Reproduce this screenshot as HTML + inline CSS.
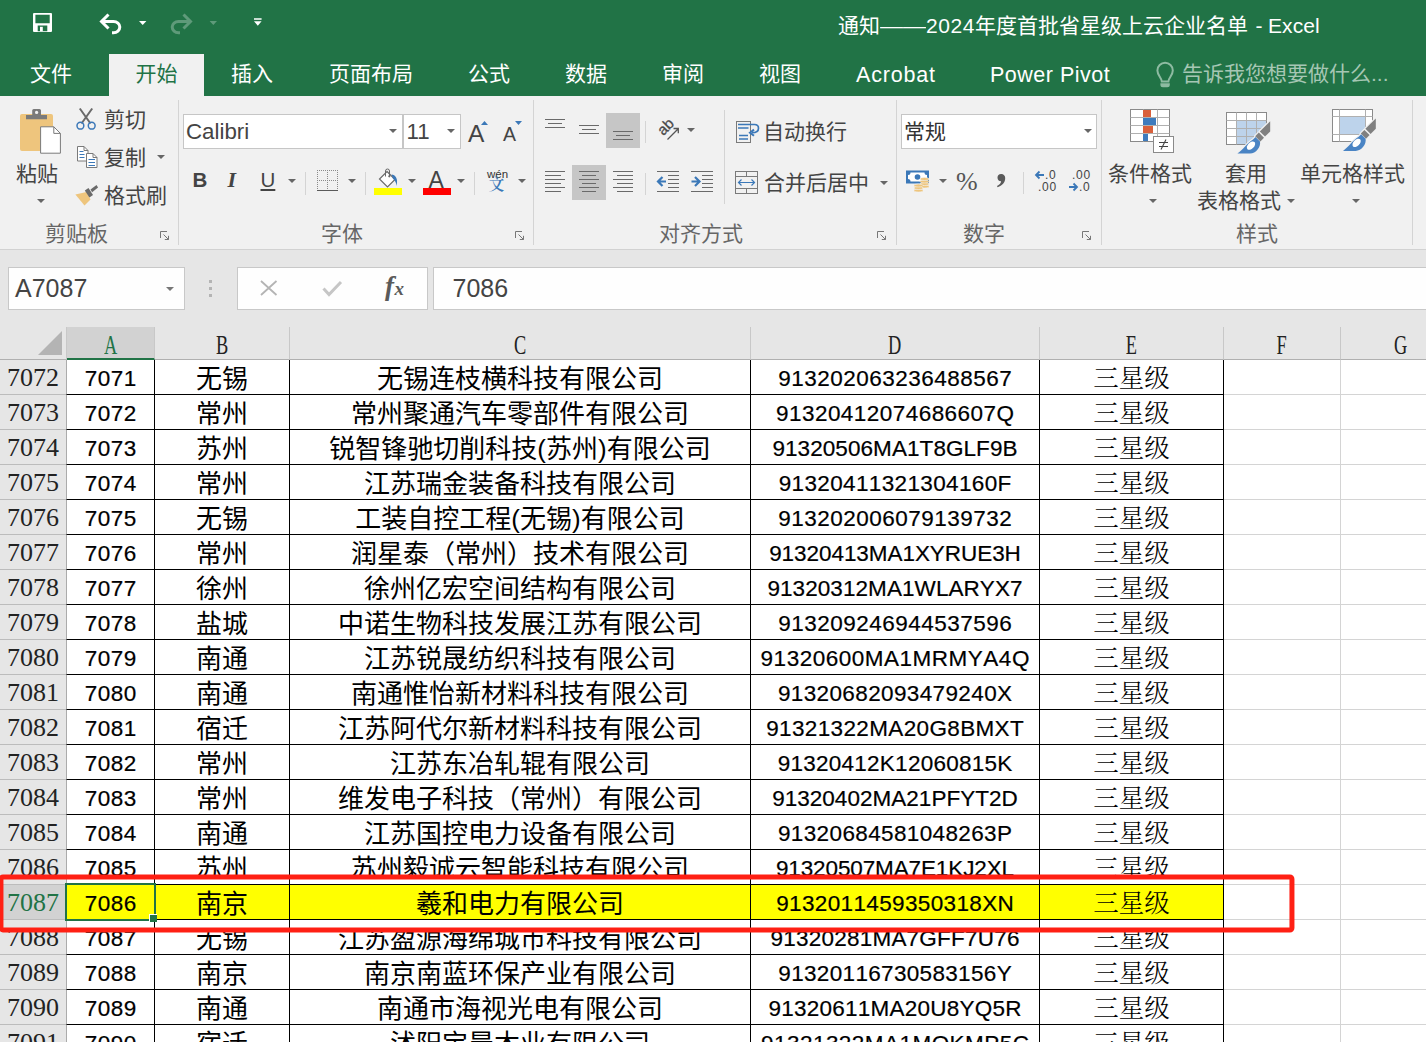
<!DOCTYPE html><html lang="zh-CN"><head><meta charset="utf-8"><title>Excel</title><style>html,body{margin:0;padding:0}
body{width:1426px;height:1042px;overflow:hidden;background:#e6e6e6;position:relative;font-family:"Liberation Sans","Noto Sans CJK SC",sans-serif;color:#444}
div,span,svg{position:absolute;box-sizing:border-box}
#top{left:0;top:0;width:1426px;height:96px;background:#217346}
.tab{top:54px;height:42px;line-height:40px;font-size:21px;color:#fff;white-space:nowrap}
.tab.act{background:#f1f1f1;color:#217346;left:109px;width:95px;text-align:center}
#title{top:1px;left:838px;height:50px;line-height:50px;font-size:21px;color:#fff;white-space:nowrap}
#ribbon{left:0;top:96px;width:1426px;height:154px;background:#f1f1f1;border-bottom:1px solid #d2d2d2}
.t{font-size:21px;line-height:30px;height:30px;white-space:nowrap;color:#444;margin-top:.3px}
.gl{font-size:21px;line-height:30px;height:30px;white-space:nowrap;color:#666;top:219px}
.vs{width:1px;background:#d4d4d4}
.box{background:#fff;border:1px solid #c6c6c6}
.arr{width:0;height:0;border-left:4px solid transparent;border-right:4px solid transparent;border-top:4px solid #666}
.selbg{background:#c6c6c6}
#fbar{left:0;top:250px;width:1426px;height:78px;background:#e6e6e6}
#grid{left:0;top:0;width:1426px;height:1042px}
#sheet{left:0;top:327px;width:1426px;height:715px;background:#fff}
.ch{z-index:2;top:327px;height:33px;line-height:36px;background:#e6e6e6;text-align:center;font-family:"Liberation Serif","Noto Serif CJK SC",serif;font-size:27px;color:#222;border-right:1px solid #c8c8c8;border-bottom:1px solid #b0b0b0}
.ch.sel{background:#d2d2d2;color:#217346;border-bottom:2px solid #217346}
.corner{z-index:2;left:0;top:327px;width:67px;height:33px;background:#e6e6e6;border-right:1px solid #c8c8c8;border-bottom:1px solid #b0b0b0}
.corner:after{content:"";position:absolute;right:4px;bottom:4px;width:0;height:0;border-left:24px solid transparent;border-bottom:24px solid #b4b4b4}
.rh{left:0;width:67px;height:35px;line-height:36px;background:#e6e6e6;text-align:center;font-family:"Liberation Serif","Noto Serif CJK SC",serif;font-size:26px;color:#222;border-right:1px solid #b0b0b0;border-bottom:1px solid #bcbcbc}
.rh.sel{background:#d2d2d2;color:#217346}
.c{height:36px;border:1px solid #000;background:#fff;color:#000;font-size:26px;text-align:center;white-space:nowrap;overflow:hidden}
.c span{position:static;display:block;line-height:36px;height:34px}
.c.hl{background:#ffff00}
.ce span{font-family:"Noto Serif CJK SC",serif;font-weight:300;font-size:25.5px;line-height:33px}
.g{height:35px;border-right:1px solid #d4d4d4;border-bottom:1px solid #d4d4d4;background:#fff}
.bt{font-size:23px;line-height:35px;height:35px;white-space:nowrap;color:#444}
.fb{border-color:#c8c8c8;background:#fefefe}
.ft{font-size:25px;line-height:42px;height:42px;white-space:nowrap;color:#444}
.ch span{position:static;display:inline-block;transform:scaleX(.68)}
.ca span,.cd span{font-size:22.5px;font-kerning:none;line-height:38px}
.ca{border-left-color:#ababab}
.selcell{left:65px;top:883px;width:91px;height:38px;border:2px solid #217346}
.handle{left:149px;top:914px;width:8px;height:8px;background:#217346;border:1px solid #fff;border-right:0;border-bottom:0;box-sizing:border-box}
.redbox{left:-2px;top:874px;width:1296px;height:58px;border:5px solid #ff2014;border-radius:4.500px;transform:translate(.45px,.45px)}
.r7086 span{clip-path:inset(0 0 8px 0)}
.r7088 span{clip-path:inset(10px 0 0 0)}
.rh span{position:static;display:block;height:34px}
.s{position:static}
.cb span,.cc span{line-height:38px}
.r0{border-top-color:#ababab}
.ca span,.cd span{-webkit-text-stroke:.2px #000}
</style></head><body>
<div id="top"></div>
<div id="title">通知<span class="s" style="display:inline-block;transform:scaleX(1.095);transform-origin:0 50%;margin-right:4px">——</span><span class="s" style="letter-spacing:.55px">2024</span>年度首批省星级上云企业名单<span class="s" style="margin-left:7.5px">-</span><span class="s" style="margin-left:5.5px;letter-spacing:.1px">Excel</span></div>
<div class="tab" style="left:30px">文件</div>
<div class="tab act">开始</div>
<div class="tab" style="left:231px">插入</div>
<div class="tab" style="left:329px">页面布局</div>
<div class="tab" style="left:468px">公式</div>
<div class="tab" style="left:565px">数据</div>
<div class="tab" style="left:662px">审阅</div>
<div class="tab" style="left:759px">视图</div>
<div class="tab" style="left:856px;font-size:21.5px;letter-spacing:.8px;margin-top:.5px">Acrobat</div>
<div class="tab" style="left:990px;font-size:21.5px;letter-spacing:.5px;margin-top:.5px">Power Pivot</div>
<div class="tab" style="left:1182px;color:#a6c7b4">告诉我您想要做什么...</div>
<div id="ribbon"></div>
<div id="fbar"></div>
<div id="sheet"></div>
<!-- QAT icons -->
<svg style="left:0;top:0" width="1426" height="96" viewBox="0 0 1426 96">
 <g fill="#fff" fill-rule="evenodd">
  <path d="M34 13h17a1 1 0 0 1 1 1v17a1 1 0 0 1-1 1H34a1 1 0 0 1-1-1V14a1 1 0 0 1 1-1z M35.400 14.700v8.600h14.300v-8.600z M37.700 25.600v5.700h9.600v-5.700z"/>
  <rect x="40" y="26.800" width="2.800" height="4.500"/>
  <path d="M139 21h7.4l-3.7 4z"/>
  <path d="M254 18.3h7.6v1.4H254z M254 21.3h7.6l-3.8 4.5z"/>
 </g>
 <path d="M108.5 14.5 101.5 21.5 108.5 28.5 M102 21.5h11.5a6.3 5.6 0 0 1 0 11.2h-1.5" fill="none" stroke="#fff" stroke-width="3" stroke-linejoin="miter"/>
 <g opacity=".28">
  <path d="M183.500 14.5 190.500 21.5 183.500 28.5 M190 21.500h-11.5a6.3 5.600 0 0 0 0 11.2h1.5" fill="none" stroke="#fff" stroke-width="3"/>
  <path d="M209.600 21h7.400l-3.700 4z" fill="#fff"/>
 </g>
 <!-- lightbulb -->
 <path d="M1161.800 81.500c0-3.500-4.400-6-4.400-11a7.700 7.700 0 0 1 15.400 0c0 5-4.400 7.500-4.400 11z" fill="none" stroke="#8ebba2" stroke-width="2"/>
 <path d="M1160.400 83.200h9.400v1.500a2.500 2.500 0 0 1-2.500 2.500h-4.400a2.500 2.500 0 0 1-2.500-2.500z" fill="#8ebba2"/>
</svg>
<!-- ribbon: clipboard + font -->
<svg style="left:0;top:96px" width="1426" height="153" viewBox="0 96 1426 153">
 <g fill="#d4d4d4">
  <rect x="178" y="100" width="1" height="145"/><rect x="533" y="100" width="1" height="145"/>
  <rect x="896" y="100" width="1" height="145"/><rect x="1101" y="100" width="1" height="145"/><rect x="1412" y="100" width="1" height="145"/>
  <rect x="724" y="110" width="1" height="94"/>
  <rect x="305" y="172" width="1" height="23"/><rect x="365" y="172" width="1" height="23"/><rect x="474" y="172" width="1" height="23"/>
  <rect x="645" y="121" width="1" height="22"/><rect x="645" y="173" width="1" height="22"/><rect x="1023" y="172" width="1" height="22"/>
 </g>
 <!-- paste -->
 <rect x="20" y="114" width="33" height="37" rx="2" fill="#eec57d"/>
 <path d="M32.200 115v-4.500a1.500 1.500 0 0 1 1.500-1.500h5.800a1.500 1.500 0 0 1 1.500 1.500V115H47v4.300H26V115z" fill="#7a7a7a"/>
 <circle cx="36.600" cy="112.400" r="1.600" fill="#f1f1f1"/>
 <path d="M40.600 126.800h13.200l6.600 6.600v19.800H40.600z" fill="#fff" stroke="#7a7a7a" stroke-width="1"/>
 <path d="M53.800 126.800v6.600h6.600" fill="none" stroke="#7a7a7a" stroke-width="1"/>
 <!-- scissors -->
 <path d="M79.800 108.500 90.500 123.500 M92.200 108.500 81.500 123.500" stroke="#6a6a6a" stroke-width="2" fill="none"/>
 <circle cx="80.400" cy="125.700" r="3.400" fill="none" stroke="#3b78b8" stroke-width="1.500"/>
 <circle cx="91.700" cy="125.700" r="3.400" fill="none" stroke="#3b78b8" stroke-width="1.500"/>
 <!-- copy -->
 <g fill="#fff" stroke="#7a7a7a" stroke-width="1">
  <path d="M77.500 146.500h6.500l4 4v10.500h-10.500z"/><path d="M84 146.500v4h4" fill="none"/>
  <path d="M86.500 153.500h6.500l4 4v10h-10.500z"/><path d="M93 153.500v4h4" fill="none"/>
 </g>
 <g stroke="#3b78b8" stroke-width="1"><path d="M79.500 151.500h4 M79.500 154.500h5 M79.500 157.500h5 M88.500 159.500h6.500 M88.500 162.500h6.500 M88.500 165.500h6.500"/></g>
 <!-- format painter -->
 <path d="M75.400 194.500 86.500 192l4 7.500-6 6z" fill="#eec57d"/>
 <path d="M84.800 190.500 88.500 188l4.500 7-3.600 2.600z" fill="#6a6a6a"/>
 <path d="M90.500 189.500 96.500 185l1.600 2.400-6 4.800z" fill="#6a6a6a"/>
 <!-- dialog launchers -->
 <g fill="none" stroke="#777" stroke-width="1">
  <path d="M160.500 238v-6.500h6.500"/><path d="M163.500 234.500l5 5 M168.500 235.800v3.700h-3.700"/>
 </g>
 <g fill="none" stroke="#777" stroke-width="1" transform="translate(355 0)">
  <path d="M160.500 238v-6.500h6.500"/><path d="M163.500 234.500l5 5 M168.500 235.800v3.700h-3.700"/>
 </g><g fill="none" stroke="#777" stroke-width="1" transform="translate(717 0)">
  <path d="M160.500 238v-6.500h6.500"/><path d="M163.500 234.500l5 5 M168.500 235.800v3.700h-3.700"/>
 </g><g fill="none" stroke="#777" stroke-width="1" transform="translate(922 0)">
  <path d="M160.500 238v-6.500h6.500"/><path d="M163.500 234.500l5 5 M168.500 235.800v3.700h-3.700"/>
 </g>
 <!-- grow / shrink triangles -->
 <path d="M481 125l3.500-4 3.500 4z M515 121h7l-3.500 4z" fill="#3b78b8"/>
 <!-- border icon -->
 <g stroke="#8a8a8a" stroke-width="1" stroke-dasharray="1 1" fill="none">
  <path d="M317 170.500h21 M317 180.500h21 M317.500 170v20 M327.500 170v20 M337.500 170v20"/>
 </g>
 <rect x="317" y="190" width="21" height="1" fill="#5a5a5a"/>
 <!-- fill bucket -->
 <rect x="374" y="188" width="28" height="7" fill="#ffff00"/>
 <path d="M387 171.500l8 8-7.500 7.500-8-8z" fill="#fff" stroke="#6a6a6a" stroke-width="1.200"/>
 <path d="M385.500 176.500v-5.500a2 2 0 0 1 4 0v5" fill="none" stroke="#6a6a6a" stroke-width="1"/>
 <circle cx="389.300" cy="176.300" r="1.100" fill="#6a6a6a"/>
 <path d="M391.600 174.600c3.600.3 6.800 3.600 5 11.400-.4-3.400-1.600-5.600-3.600-7.200z" fill="#3b78b8"/>
 <!-- font color bar -->
 <rect x="423" y="188" width="28" height="7" fill="#ff0000"/>
</svg>
<div class="t" style="left:16px;top:159px">粘贴</div>
<div class="arr" style="left:37px;top:199px"></div>
<div class="t" style="left:104px;top:105px">剪切</div>
<div class="t" style="left:104px;top:143px">复制</div>
<div class="arr" style="left:157px;top:155px"></div>
<div class="t" style="left:104px;top:181px">格式刷</div>
<div class="gl" style="left:45px">剪贴板</div>
<div class="gl" style="left:321px">字体</div>
<div class="gl" style="left:659px">对齐方式</div>
<div class="gl" style="left:963px">数字</div>
<div class="gl" style="left:1236px">样式</div>
<div class="box" style="left:183px;top:114px;width:220px;height:35px"></div>
<div class="box" style="left:403px;top:114px;width:58px;height:35px"></div>
<div class="bt" style="left:186px;top:114px;font-size:22.3px">Calibri</div>
<div class="bt" style="left:406.5px;top:114px;font-size:22.3px">11</div>
<div class="arr" style="left:389px;top:129px"></div>
<div class="arr" style="left:447px;top:129px"></div>
<div class="bt" style="left:468px;top:115.5px;font-size:24.5px">A</div>
<div class="bt" style="left:503px;top:117px;font-size:19.5px">A</div>
<div class="bt" style="left:192.5px;top:161.5px;font-weight:bold;font-size:20.5px">B</div>
<div class="bt" style="left:227.5px;top:161.5px;font-style:italic;font-weight:bold;font-size:22px;font-family:'Liberation Serif',serif">I</div>
<div class="bt" style="left:260.5px;top:161.5px;font-size:20.5px;text-decoration:underline;text-underline-offset:2px">U</div>
<div class="arr" style="left:288px;top:179px"></div>
<div class="arr" style="left:348px;top:179px"></div>
<div class="arr" style="left:408px;top:179px"></div>
<div class="bt" style="left:428.5px;top:163px;font-size:23px">A</div>
<div class="arr" style="left:457px;top:179px"></div>
<div class="bt" style="left:487px;top:166.7px;font-size:11.5px;line-height:14px;height:14px;color:#333">wén</div>
<div class="bt" style="left:488.7px;top:174.2px;font-size:15.5px;line-height:18px;height:18px;color:#3b78b8;font-family:'Noto Serif CJK SC',serif;font-weight:600">文</div>
<div class="arr" style="left:518px;top:179px"></div>
<!-- ribbon: alignment + number -->
<div class="selbg" style="left:606px;top:113px;width:34px;height:35px"></div>
<div class="selbg" style="left:572px;top:165px;width:34px;height:35px"></div>
<svg style="left:0;top:96px" width="1426" height="153" viewBox="0 96 1426 153">
 <g fill="#6a6a6a">
  <!-- top/middle/bottom align -->
  <path d="M545 119h20v1h-20z M548 123h14v1h-14z M545 127h20v1h-20z"/>
  <path d="M579 125h20v1h-20z M582 129h14v1h-14z M579 133h20v1h-20z"/>
  <path d="M613 131h20v1h-20z M616 135h14v1h-14z M613 139h20v1h-20z"/>
  <!-- left -->
  <path d="M545 171h20v1h-20z M545 175h16v1h-16z M545 179h20v1h-20z M545 183h16v1h-16z M545 187h20v1h-20z M545 191h16v1h-16z"/>
  <!-- center -->
  <path d="M579 171h20v1h-20z M582 175h14v1h-14z M579 179h20v1h-20z M582 183h14v1h-14z M579 187h20v1h-20z M582 191h14v1h-14z"/>
  <!-- right -->
  <path d="M613 171h20v1h-20z M617 175h16v1h-16z M613 179h20v1h-20z M617 183h16v1h-16z M613 187h20v1h-20z M617 191h16v1h-16z"/>
  <!-- indent -->
  <path d="M657 171h22v1h-22z M668 175h11v1h-11z M668 179h11v1h-11z M668 183h11v1h-11z M668 187h11v1h-11z M657 191h22v1h-22z"/>
  <path d="M691 171h22v1h-22z M702 175h11v1h-11z M702 179h11v1h-11z M702 183h11v1h-11z M702 187h11v1h-11z M691 191h22v1h-22z"/>
 </g>
 <g fill="none" stroke="#3b78b8" stroke-width="2.200">
  <path d="M666 181.500h-7.500 M662.500 177l-4.500 4.500 4.500 4.500"/>
  <path d="M691.500 181.500h7.500 M695 177l4.500 4.500-4.500 4.500"/>
 </g>
 <!-- orientation -->
 <path d="M667.500 139.500l10.500-10.500 M673.500 128.500h4.800v4.800" fill="none" stroke="#555" stroke-width="1.300"/>
 <text x="0" y="0" transform="translate(663.200 136.200) rotate(-45)" font-family="Liberation Sans, sans-serif" font-size="15" fill="#4a4a4a" stroke="#4a4a4a" stroke-width=".3">ab</text>
 <!-- wrap text -->
 <rect x="736.500" y="121.500" width="14" height="21" fill="none" stroke="#7a7a7a"/>
 <g fill="none" stroke="#3b78b8" stroke-width="1.400">
  <path d="M738 124.500h16.500c2.800 0 4 1.700 4 3.700 0 2.800-2.300 4.500-6.500 4.500" stroke-width="1.700"/>
  <path d="M754 129.600l-4 3.100 4 3.100" stroke-width="2"/>
  <path d="M738 128h10.500 M739 135.500h9 M739 139h9"/>
 </g>
 <!-- merge -->
 <g fill="none" stroke="#7a7a7a" stroke-width="1"><rect x="735.500" y="171.500" width="22" height="22"/><path d="M735.500 176.500h22 M735.500 188.500h22 M746.500 171.500v5 M746.500 188.500v5"/></g>
 <path d="M738.500 182.500h16 M741.500 179.500l-3 3 3 3 M751.500 179.500l3 3-3 3" fill="none" stroke="#3b78b8" stroke-width="1.200"/>
 <!-- currency -->
 <rect x="906" y="170.500" width="23" height="13" fill="#3b78b8"/>
 <path d="M908 175a2.500 2.500 0 0 0 2.500-2.500h14a2.500 2.500 0 0 0 2.500 2.500v4a2.500 2.500 0 0 0-2.500 2.500h-14a2.500 2.500 0 0 0-2.500-2.500z" fill="#fff"/>
 <circle cx="917.500" cy="177" r="2.800" fill="#3b78b8"/>
 <g fill="#eec57d" stroke="#f1f1f1" stroke-width=".6"><ellipse cx="924.500" cy="186.500" rx="4.500" ry="1.500"/><ellipse cx="924.500" cy="184" rx="4.500" ry="1.500"/><ellipse cx="924.500" cy="181.500" rx="4.500" ry="1.500"/><ellipse cx="924.500" cy="179" rx="4.500" ry="1.500"/>
 <ellipse cx="918.500" cy="190.500" rx="4.500" ry="1.500"/><ellipse cx="918.500" cy="188" rx="4.500" ry="1.500"/><ellipse cx="918.500" cy="185.500" rx="4.500" ry="1.500"/></g>
 <!-- decimal arrows -->
 <g fill="none" stroke="#3b78b8" stroke-width="1.800">
  <path d="M1044 175h-8 M1039.500 171.500l-3.500 3.500 3.500 3.500"/>
  <path d="M1069 187h8 M1073.500 183.500l3.500 3.500-3.500 3.500"/>
 </g>
 <g font-family="Liberation Sans, sans-serif" font-size="12" fill="#444" letter-spacing=".7">
  <text x="1045" y="179">.0</text><text x="1038" y="191">.00</text>
  <text x="1072" y="179">.00</text><text x="1079" y="191">.0</text>
 </g>
</svg>
<div class="arr" style="left:687px;top:128px"></div>
<div class="t" style="left:763px;top:117px">自动换行</div>
<div class="t" style="left:764px;top:168px">合并后居中</div>
<div class="arr" style="left:880px;top:181px"></div>
<div class="box" style="left:901px;top:114px;width:196px;height:35px"></div>
<div class="t" style="left:904px;top:117px;color:#333">常规</div>
<div class="arr" style="left:1084px;top:129px"></div>
<div class="arr" style="left:939px;top:179px"></div>
<div class="bt" style="left:956px;top:163.5px;font-size:26px;font-family:'Liberation Serif',serif;color:#555">%</div>
<svg style="left:990px;top:170px" width="20" height="22" viewBox="990 170 20 22"><path d="M1001.300 174a3.800 3.800 0 0 1 3.900 4c0 4.500-3 7.800-7.600 9.200l-.6-1.300c2.400-1 3.900-2.600 4.100-4.600a3.700 3.700 0 0 1-3.600-3.700 3.700 3.700 0 0 1 3.800-3.600z" fill="#5a5a5a"/></svg>
<!-- ribbon: styles -->
<svg style="left:0;top:96px" width="1426" height="153" viewBox="0 96 1426 153">
 <!-- conditional formatting -->
 <rect x="1130.500" y="109.500" width="39" height="32" fill="#fff" stroke="#8a8a8a"/>
 <path d="M1130.500 117.500h39 M1130.500 125.500h39 M1130.500 133.500h39 M1143.500 109.500v32 M1157.500 109.500v32" stroke="#b0b0b0" fill="none"/>
 <rect x="1143" y="110" width="8" height="7" fill="#d9603b"/><rect x="1143" y="118" width="13" height="7" fill="#3e7bbd"/>
 <rect x="1143" y="126" width="10" height="7" fill="#d9603b"/><rect x="1143" y="134" width="5" height="7" fill="#3e7bbd"/>
 <rect x="1153.500" y="136.500" width="20" height="16" fill="#fff" stroke="#8a8a8a"/>
 <path d="M1159 142.500h9 M1159 146.500h9 M1161 149.500l5-10" stroke="#444" stroke-width="1.100" fill="none"/>
 <!-- format as table -->
 <rect x="1226.500" y="112.500" width="40" height="32" fill="#fff" stroke="#8a8a8a"/>
 <rect x="1237" y="121" width="29" height="23" fill="#bdd3eb"/>
 <path d="M1226.500 120.500h40 M1226.500 128.500h40 M1226.500 136.500h40 M1236.500 112.500v32 M1246.500 112.500v32 M1256.500 112.500v32" stroke="#b0b0b0" fill="none"/>
 <g>
  <path d="M1271.500 119.500v28.500h-24l-11 7.500v-3l12-9 9.500-9.500z" fill="#f1f1f1"/>
  <g stroke="#f1f1f1" stroke-width="2.400" stroke-linejoin="round">
  <path d="M1270.200 121.200v10.200l-5.200 5.200-5.200-5.200z" fill="#808080"/>
  <path d="M1258.800 132.600l5.200 5.200-3.600 3.600-5.200-5.200z" fill="#808080"/>
  <path d="M1237.400 153.600c5.600-3.600 9.600-10.600 15.600-14.100l2.500-2.500 4.500 4.500c1 5.500-4 12.100-10 12.100z" fill="#4a84c4"/>
  </g>
  <path d="M1270.200 121.200v10.200l-5.200 5.200-5.200-5.200z" fill="#808080"/>
  <path d="M1258.800 132.600l5.200 5.200-3.600 3.600-5.200-5.200z" fill="#808080"/>
  <path d="M1237.400 153.600c5.600-3.600 9.600-10.600 15.600-14.100l2.500-2.500 4.500 4.500c1 5.500-4 12.100-10 12.100z" fill="#4a84c4"/>
  <ellipse cx="1251" cy="145.600" rx="5" ry="3.100" transform="rotate(-45 1251 145.600)" fill="#fff"/>
 </g>
 <!-- cell styles -->
 <rect x="1332.500" y="109.500" width="40" height="32" fill="#fff" stroke="#8a8a8a"/>
 <path d="M1332.500 116.500h40 M1332.500 134.500h40 M1339.500 109.500v32 M1365.500 109.500v32" stroke="#b0b0b0" fill="none"/>
 <rect x="1340" y="117" width="25" height="17" fill="#bdd3eb"/>
 <g transform="translate(105.600 -2.700)">
  <path d="M1271.500 119.500v28.500h-24l-11 7.500v-3l12-9 9.500-9.500z" fill="#f1f1f1"/>
  <g stroke="#f1f1f1" stroke-width="2.400" stroke-linejoin="round">
  <path d="M1270.200 121.200v10.200l-5.200 5.200-5.200-5.200z" fill="#808080"/>
  <path d="M1258.800 132.600l5.200 5.200-3.600 3.600-5.200-5.200z" fill="#808080"/>
  <path d="M1237.400 153.600c5.600-3.600 9.600-10.600 15.600-14.100l2.500-2.500 4.500 4.500c1 5.500-4 12.100-10 12.100z" fill="#4a84c4"/>
  </g>
  <path d="M1270.200 121.200v10.200l-5.200 5.200-5.200-5.200z" fill="#808080"/>
  <path d="M1258.800 132.600l5.200 5.200-3.600 3.600-5.200-5.200z" fill="#808080"/>
  <path d="M1237.400 153.600c5.600-3.600 9.600-10.600 15.600-14.100l2.500-2.500 4.500 4.500c1 5.500-4 12.100-10 12.100z" fill="#4a84c4"/>
  <ellipse cx="1251" cy="145.600" rx="5" ry="3.100" transform="rotate(-45 1251 145.600)" fill="#fff"/>
 </g>
</svg>
<div class="t" style="left:1108px;top:159px">条件格式</div>
<div class="arr" style="left:1149px;top:199px"></div>
<div class="t" style="left:1225px;top:159px">套用</div>
<div class="t" style="left:1197px;top:186px">表格格式</div>
<div class="arr" style="left:1287px;top:199px"></div>
<div class="t" style="left:1300px;top:159px">单元格样式</div>
<div class="arr" style="left:1352px;top:199px"></div>
<!-- formula bar -->
<div class="box fb" style="left:8px;top:267px;width:177px;height:43px"></div>
<div class="box fb" style="left:237px;top:267px;width:191px;height:43px"></div>
<div class="box fb" style="left:433px;top:267px;width:1000px;height:43px"></div>
<div class="ft" style="left:15px;top:267px">A7087</div>
<div class="arr" style="left:166px;top:287px;border-top-color:#777"></div>
<div class="ft" style="left:452.5px;top:266.5px">7086</div>
<svg style="left:0;top:249px" width="1426" height="78" viewBox="0 249 1426 78">
 <g fill="#b4b4b4"><rect x="209" y="280" width="3" height="3"/><rect x="209" y="287" width="3" height="3"/><rect x="209" y="294" width="3" height="3"/></g>
 <path d="M261 281l15.500 14 M276.500 281l-15.500 14" stroke="#b4b4b4" stroke-width="1.800" fill="none"/>
 <path d="M323.500 288.500l5.500 6 12-12.500" stroke="#c6c6c6" stroke-width="3" fill="none"/>
 <text x="385" y="295" font-family="Liberation Serif, serif" font-style="italic" font-weight="bold" font-size="27" fill="#5a5a5a">f</text>
 <text x="394.500" y="295" font-family="Liberation Serif, serif" font-style="italic" font-weight="bold" font-size="19" fill="#5a5a5a">x</text>
</svg>

<div id="grid">
<div class="ch sel" style="left:67px;width:88px"><span>A</span></div>
<div class="ch" style="left:155px;width:135px"><span>B</span></div>
<div class="ch" style="left:290px;width:461px"><span>C</span></div>
<div class="ch" style="left:751px;width:289px"><span>D</span></div>
<div class="ch" style="left:1040px;width:184px"><span>E</span></div>
<div class="ch" style="left:1224px;width:117px"><span>F</span></div>
<div class="ch" style="left:1341px;width:120px"><span>G</span></div>
<div class="corner"></div>
<div class="rh" style="top:360px"><span>7072</span></div>
<div class="c ca r0" style="left:66px;top:359px;width:89px"><span style="letter-spacing:0.496px;margin-left:0.496px">7071</span></div>
<div class="c cb r0" style="left:154px;top:359px;width:136px"><span>无锡</span></div>
<div class="c cc r0" style="left:289px;top:359px;width:462px"><span>无锡连枝横科技有限公司</span></div>
<div class="c cd r0" style="left:750px;top:359px;width:290px"><span style="letter-spacing:0.496px;margin-left:0.496px">913202063236488567</span></div>
<div class="c ce r0" style="left:1039px;top:359px;width:185px"><span>三星级</span></div>
<div class="g" style="left:1224px;top:360px;width:117px"></div>
<div class="g" style="left:1341px;top:360px;width:120px"></div>
<div class="rh" style="top:395px"><span>7073</span></div>
<div class="c ca" style="left:66px;top:394px;width:89px"><span style="letter-spacing:0.496px;margin-left:0.496px">7072</span></div>
<div class="c cb" style="left:154px;top:394px;width:136px"><span>常州</span></div>
<div class="c cc" style="left:289px;top:394px;width:462px"><span>常州聚通汽车零部件有限公司</span></div>
<div class="c cd" style="left:750px;top:394px;width:290px"><span style="letter-spacing:0.455px;margin-left:0.455px">91320412074686607Q</span></div>
<div class="c ce" style="left:1039px;top:394px;width:185px"><span>三星级</span></div>
<div class="g" style="left:1224px;top:395px;width:117px"></div>
<div class="g" style="left:1341px;top:395px;width:120px"></div>
<div class="rh" style="top:430px"><span>7074</span></div>
<div class="c ca" style="left:66px;top:429px;width:89px"><span style="letter-spacing:0.496px;margin-left:0.496px">7073</span></div>
<div class="c cb" style="left:154px;top:429px;width:136px"><span>苏州</span></div>
<div class="c cc" style="left:289px;top:429px;width:462px"><span>锐智锋驰切削科技(苏州)有限公司</span></div>
<div class="c cd" style="left:750px;top:429px;width:290px"><span style="letter-spacing:0.068px;margin-left:0.068px">91320506MA1T8GLF9B</span></div>
<div class="c ce" style="left:1039px;top:429px;width:185px"><span>三星级</span></div>
<div class="g" style="left:1224px;top:430px;width:117px"></div>
<div class="g" style="left:1341px;top:430px;width:120px"></div>
<div class="rh" style="top:465px"><span>7075</span></div>
<div class="c ca" style="left:66px;top:464px;width:89px"><span style="letter-spacing:0.496px;margin-left:0.496px">7074</span></div>
<div class="c cb" style="left:154px;top:464px;width:136px"><span>常州</span></div>
<div class="c cc" style="left:289px;top:464px;width:462px"><span>江苏瑞金装备科技有限公司</span></div>
<div class="c cd" style="left:750px;top:464px;width:290px"><span style="letter-spacing:0.36px;margin-left:0.36px">91320411321304160F</span></div>
<div class="c ce" style="left:1039px;top:464px;width:185px"><span>三星级</span></div>
<div class="g" style="left:1224px;top:465px;width:117px"></div>
<div class="g" style="left:1341px;top:465px;width:120px"></div>
<div class="rh" style="top:500px"><span>7076</span></div>
<div class="c ca" style="left:66px;top:499px;width:89px"><span style="letter-spacing:0.496px;margin-left:0.496px">7075</span></div>
<div class="c cb" style="left:154px;top:499px;width:136px"><span>无锡</span></div>
<div class="c cc" style="left:289px;top:499px;width:462px"><span>工装自控工程(无锡)有限公司</span></div>
<div class="c cd" style="left:750px;top:499px;width:290px"><span style="letter-spacing:0.496px;margin-left:0.496px">913202006079139732</span></div>
<div class="c ce" style="left:1039px;top:499px;width:185px"><span>三星级</span></div>
<div class="g" style="left:1224px;top:500px;width:117px"></div>
<div class="g" style="left:1341px;top:500px;width:120px"></div>
<div class="rh" style="top:535px"><span>7077</span></div>
<div class="c ca" style="left:66px;top:534px;width:89px"><span style="letter-spacing:0.496px;margin-left:0.496px">7076</span></div>
<div class="c cb" style="left:154px;top:534px;width:136px"><span>常州</span></div>
<div class="c cc" style="left:289px;top:534px;width:462px"><span>润星泰（常州）技术有限公司</span></div>
<div class="c cd" style="left:750px;top:534px;width:290px"><span style="letter-spacing:-0.056px;margin-left:-0.056px">91320413MA1XYRUE3H</span></div>
<div class="c ce" style="left:1039px;top:534px;width:185px"><span>三星级</span></div>
<div class="g" style="left:1224px;top:535px;width:117px"></div>
<div class="g" style="left:1341px;top:535px;width:120px"></div>
<div class="rh" style="top:570px"><span>7078</span></div>
<div class="c ca" style="left:66px;top:569px;width:89px"><span style="letter-spacing:0.496px;margin-left:0.496px">7077</span></div>
<div class="c cb" style="left:154px;top:569px;width:136px"><span>徐州</span></div>
<div class="c cc" style="left:289px;top:569px;width:462px"><span>徐州亿宏空间结构有限公司</span></div>
<div class="c cd" style="left:750px;top:569px;width:290px"><span style="letter-spacing:0.068px;margin-left:0.068px">91320312MA1WLARYX7</span></div>
<div class="c ce" style="left:1039px;top:569px;width:185px"><span>三星级</span></div>
<div class="g" style="left:1224px;top:570px;width:117px"></div>
<div class="g" style="left:1341px;top:570px;width:120px"></div>
<div class="rh" style="top:605px"><span>7079</span></div>
<div class="c ca" style="left:66px;top:604px;width:89px"><span style="letter-spacing:0.496px;margin-left:0.496px">7078</span></div>
<div class="c cb" style="left:154px;top:604px;width:136px"><span>盐城</span></div>
<div class="c cc" style="left:289px;top:604px;width:462px"><span>中诺生物科技发展江苏有限公司</span></div>
<div class="c cd" style="left:750px;top:604px;width:290px"><span style="letter-spacing:0.496px;margin-left:0.496px">913209246944537596</span></div>
<div class="c ce" style="left:1039px;top:604px;width:185px"><span>三星级</span></div>
<div class="g" style="left:1224px;top:605px;width:117px"></div>
<div class="g" style="left:1341px;top:605px;width:120px"></div>
<div class="rh" style="top:640px"><span>7080</span></div>
<div class="c ca" style="left:66px;top:639px;width:89px"><span style="letter-spacing:0.496px;margin-left:0.496px">7079</span></div>
<div class="c cb" style="left:154px;top:639px;width:136px"><span>南通</span></div>
<div class="c cc" style="left:289px;top:639px;width:462px"><span>江苏锐晟纺织科技有限公司</span></div>
<div class="c cd" style="left:750px;top:639px;width:290px"><span style="letter-spacing:0.511px;margin-left:0.511px">91320600MA1MRMYA4Q</span></div>
<div class="c ce" style="left:1039px;top:639px;width:185px"><span>三星级</span></div>
<div class="g" style="left:1224px;top:640px;width:117px"></div>
<div class="g" style="left:1341px;top:640px;width:120px"></div>
<div class="rh" style="top:675px"><span>7081</span></div>
<div class="c ca" style="left:66px;top:674px;width:89px"><span style="letter-spacing:0.496px;margin-left:0.496px">7080</span></div>
<div class="c cb" style="left:154px;top:674px;width:136px"><span>南通</span></div>
<div class="c cc" style="left:289px;top:674px;width:462px"><span>南通惟怡新材料科技有限公司</span></div>
<div class="c cd" style="left:750px;top:674px;width:290px"><span style="letter-spacing:0.374px;margin-left:0.374px">91320682093479240X</span></div>
<div class="c ce" style="left:1039px;top:674px;width:185px"><span>三星级</span></div>
<div class="g" style="left:1224px;top:675px;width:117px"></div>
<div class="g" style="left:1341px;top:675px;width:120px"></div>
<div class="rh" style="top:710px"><span>7082</span></div>
<div class="c ca" style="left:66px;top:709px;width:89px"><span style="letter-spacing:0.496px;margin-left:0.496px">7081</span></div>
<div class="c cb" style="left:154px;top:709px;width:136px"><span>宿迁</span></div>
<div class="c cc" style="left:289px;top:709px;width:462px"><span>江苏阿代尔新材料科技有限公司</span></div>
<div class="c cd" style="left:750px;top:709px;width:290px"><span style="letter-spacing:0.357px;margin-left:0.357px">91321322MA20G8BMXT</span></div>
<div class="c ce" style="left:1039px;top:709px;width:185px"><span>三星级</span></div>
<div class="g" style="left:1224px;top:710px;width:117px"></div>
<div class="g" style="left:1341px;top:710px;width:120px"></div>
<div class="rh" style="top:745px"><span>7083</span></div>
<div class="c ca" style="left:66px;top:744px;width:89px"><span style="letter-spacing:0.496px;margin-left:0.496px">7082</span></div>
<div class="c cb" style="left:154px;top:744px;width:136px"><span>常州</span></div>
<div class="c cc" style="left:289px;top:744px;width:462px"><span>江苏东冶轧辊有限公司</span></div>
<div class="c cd" style="left:750px;top:744px;width:290px"><span style="letter-spacing:0.255px;margin-left:0.255px">91320412K12060815K</span></div>
<div class="c ce" style="left:1039px;top:744px;width:185px"><span>三星级</span></div>
<div class="g" style="left:1224px;top:745px;width:117px"></div>
<div class="g" style="left:1341px;top:745px;width:120px"></div>
<div class="rh" style="top:780px"><span>7084</span></div>
<div class="c ca" style="left:66px;top:779px;width:89px"><span style="letter-spacing:0.496px;margin-left:0.496px">7083</span></div>
<div class="c cb" style="left:154px;top:779px;width:136px"><span>常州</span></div>
<div class="c cc" style="left:289px;top:779px;width:462px"><span>维发电子科技（常州）有限公司</span></div>
<div class="c cd" style="left:750px;top:779px;width:290px"><span style="letter-spacing:0.034px;margin-left:0.034px">91320402MA21PFYT2D</span></div>
<div class="c ce" style="left:1039px;top:779px;width:185px"><span>三星级</span></div>
<div class="g" style="left:1224px;top:780px;width:117px"></div>
<div class="g" style="left:1341px;top:780px;width:120px"></div>
<div class="rh" style="top:815px"><span>7085</span></div>
<div class="c ca" style="left:66px;top:814px;width:89px"><span style="letter-spacing:0.496px;margin-left:0.496px">7084</span></div>
<div class="c cb" style="left:154px;top:814px;width:136px"><span>南通</span></div>
<div class="c cc" style="left:289px;top:814px;width:462px"><span>江苏国控电力设备有限公司</span></div>
<div class="c cd" style="left:750px;top:814px;width:290px"><span style="letter-spacing:0.371px;margin-left:0.371px">91320684581048263P</span></div>
<div class="c ce" style="left:1039px;top:814px;width:185px"><span>三星级</span></div>
<div class="g" style="left:1224px;top:815px;width:117px"></div>
<div class="g" style="left:1341px;top:815px;width:120px"></div>
<div class="rh r7086" style="top:850px"><span>7086</span></div>
<div class="c ca r7086" style="left:66px;top:849px;width:89px"><span style="letter-spacing:0.496px;margin-left:0.496px">7085</span></div>
<div class="c cb r7086" style="left:154px;top:849px;width:136px"><span>苏州</span></div>
<div class="c cc r7086" style="left:289px;top:849px;width:462px"><span>苏州毅诚云智能科技有限公司</span></div>
<div class="c cd r7086" style="left:750px;top:849px;width:290px"><span style="letter-spacing:-0.118px;margin-left:-0.118px">91320507MA7E1KJ2XL</span></div>
<div class="c ce r7086" style="left:1039px;top:849px;width:185px"><span>三星级</span></div>
<div class="g" style="left:1224px;top:850px;width:117px"></div>
<div class="g" style="left:1341px;top:850px;width:120px"></div>
<div class="rh sel" style="top:885px"><span>7087</span></div>
<div class="c ca hl" style="left:66px;top:884px;width:89px"><span style="letter-spacing:0.496px;margin-left:0.496px">7086</span></div>
<div class="c cb hl" style="left:154px;top:884px;width:136px"><span>南京</span></div>
<div class="c cc hl" style="left:289px;top:884px;width:462px"><span>羲和电力有限公司</span></div>
<div class="c cd hl" style="left:750px;top:884px;width:290px"><span style="letter-spacing:0.365px;margin-left:0.365px">9132011459350318XN</span></div>
<div class="c ce hl" style="left:1039px;top:884px;width:185px"><span>三星级</span></div>
<div class="g" style="left:1224px;top:885px;width:117px"></div>
<div class="g" style="left:1341px;top:885px;width:120px"></div>
<div class="rh r7088" style="top:920px"><span>7088</span></div>
<div class="c ca r7088" style="left:66px;top:919px;width:89px"><span style="letter-spacing:0.496px;margin-left:0.496px">7087</span></div>
<div class="c cb r7088" style="left:154px;top:919px;width:136px"><span>无锡</span></div>
<div class="c cc r7088" style="left:289px;top:919px;width:462px"><span>江苏盈源海绵城市科技有限公司</span></div>
<div class="c cd r7088" style="left:750px;top:919px;width:290px"><span style="letter-spacing:0.222px;margin-left:0.222px">91320281MA7GFF7U76</span></div>
<div class="c ce r7088" style="left:1039px;top:919px;width:185px"><span>三星级</span></div>
<div class="g" style="left:1224px;top:920px;width:117px"></div>
<div class="g" style="left:1341px;top:920px;width:120px"></div>
<div class="rh" style="top:955px"><span>7089</span></div>
<div class="c ca" style="left:66px;top:954px;width:89px"><span style="letter-spacing:0.496px;margin-left:0.496px">7088</span></div>
<div class="c cb" style="left:154px;top:954px;width:136px"><span>南京</span></div>
<div class="c cc" style="left:289px;top:954px;width:462px"><span>南京南蓝环保产业有限公司</span></div>
<div class="c cd" style="left:750px;top:954px;width:290px"><span style="letter-spacing:0.329px;margin-left:0.329px">91320116730583156Y</span></div>
<div class="c ce" style="left:1039px;top:954px;width:185px"><span>三星级</span></div>
<div class="g" style="left:1224px;top:955px;width:117px"></div>
<div class="g" style="left:1341px;top:955px;width:120px"></div>
<div class="rh" style="top:990px"><span>7090</span></div>
<div class="c ca" style="left:66px;top:989px;width:89px"><span style="letter-spacing:0.496px;margin-left:0.496px">7089</span></div>
<div class="c cb" style="left:154px;top:989px;width:136px"><span>南通</span></div>
<div class="c cc" style="left:289px;top:989px;width:462px"><span>南通市海视光电有限公司</span></div>
<div class="c cd" style="left:750px;top:989px;width:290px"><span style="letter-spacing:0.232px;margin-left:0.232px">91320611MA20U8YQ5R</span></div>
<div class="c ce" style="left:1039px;top:989px;width:185px"><span>三星级</span></div>
<div class="g" style="left:1224px;top:990px;width:117px"></div>
<div class="g" style="left:1341px;top:990px;width:120px"></div>
<div class="rh" style="top:1025px"><span>7091</span></div>
<div class="c ca" style="left:66px;top:1024px;width:89px"><span style="letter-spacing:0.496px;margin-left:0.496px">7090</span></div>
<div class="c cb" style="left:154px;top:1024px;width:136px"><span>宿迁</span></div>
<div class="c cc" style="left:289px;top:1024px;width:462px"><span>沭阳宝晨木业有限公司</span></div>
<div class="c cd" style="left:750px;top:1024px;width:290px"><span style="letter-spacing:0.455px;margin-left:0.455px">91321322MA1MQKMP5C</span></div>
<div class="c ce" style="left:1039px;top:1024px;width:185px"><span>三星级</span></div>
<div class="g" style="left:1224px;top:1025px;width:117px"></div>
<div class="g" style="left:1341px;top:1025px;width:120px"></div>
<div class="selcell"></div>
<div class="handle"></div>
<div class="redbox"></div>

</div>
</body></html>
